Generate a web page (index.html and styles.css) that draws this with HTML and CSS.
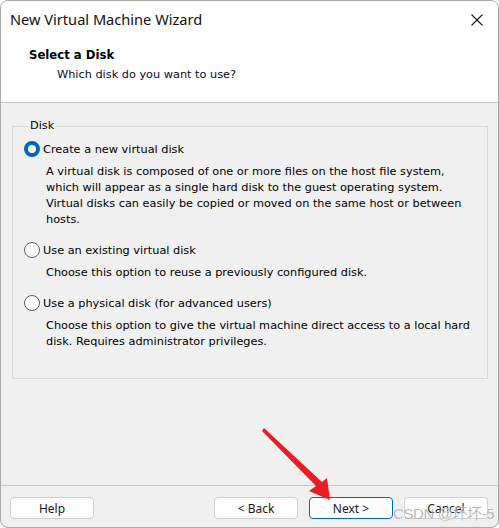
FILE: index.html
```html
<!DOCTYPE html>
<html>
<head>
<meta charset="utf-8">
<link rel="stylesheet" href="styles.css">
</head>
<body>
<div class="window">
  <div class="top">
    <div class="titlebar">
      <span class="title">New Virtual Machine Wizard</span>
      <svg class="close" width="12" height="12" viewBox="0 0 12 12"><path d="M0.5 0.5 L11.5 11.5 M11.5 0.5 L0.5 11.5" stroke="#1a1a1a" stroke-width="1.1" fill="none"/></svg>
    </div>
    <div class="header">
      <div class="h-title">Select a Disk</div>
      <div class="h-sub">Which disk do you want to use?</div>
    </div>
  </div>
  <div class="body">
    <fieldset class="group">
      <legend>Disk</legend>
      <div class="option">
        <div class="radio-row"><span class="radio checked"></span><span>Create a new virtual disk</span></div>
        <p class="desc">A virtual disk is composed of one or more files on the host file system, which will appear as a single hard disk to the guest operating system. Virtual disks can easily be copied or moved on the same host or between hosts.</p>
      </div>
      <div class="option">
        <div class="radio-row"><span class="radio"></span><span>Use an existing virtual disk</span></div>
        <p class="desc">Choose this option to reuse a previously configured disk.</p>
      </div>
      <div class="option">
        <div class="radio-row"><span class="radio"></span><span>Use a physical disk (for advanced users)</span></div>
        <p class="desc">Choose this option to give the virtual machine direct access to a local hard disk. Requires administrator privileges.</p>
      </div>
    </fieldset>
  </div>
  <div class="footer">
    <button class="btn">Help</button>
    <div class="right-btns">
      <button class="btn">&lt; Back</button>
      <button class="btn primary">Next &gt;</button>
      <button class="btn">Cancel</button>
    </div>
  </div>
  <svg class="arrow" width="499" height="528" viewBox="0 0 499 528">
    <polygon points="262,431 264,428 322,482 327,478 330,500 309,491 316,486" fill="#ec1c24"/>
  </svg>
  <div class="watermark">CSDN @坏坏-5</div>
</div>
</body>
</html>
```
FILE: styles.css
```css
html, body { margin: 0; padding: 0; background: #ffffff; }
.window {
  position: relative;
  width: 499px;
  height: 528px;
  box-sizing: border-box;
  border: 1px solid #a8a8a8;
  border-radius: 8px;
  overflow: hidden;
  background: #f0f0f0;
  display: flex;
  flex-direction: column;
  font-family: "DejaVu Sans", Verdana, sans-serif;
  font-size: 11.3px;
  color: #000;
}
.top {
  background: #ffffff;
  border-bottom: 1px solid #c5c5c5;
  height: 102px;
  box-sizing: border-box;
  flex: none;
}
.titlebar {
  height: 38px;
  display: flex;
  align-items: center;
  justify-content: space-between;
  padding: 0 15px 0 9px;
}
.title {
  font-family: "Noto Sans", "Open Sans", sans-serif;
  font-size: 14.6px;
  color: #111;
  margin-top: -2px;
}
.close { margin-top: -1px; }
.header { padding: 8px 0 0 28px; }
.h-title { font-weight: bold; font-size: 11.7px; line-height: 16px; }
.h-sub { padding-left: 28px; margin-top: 4px; line-height: 16px; color: #0a0a30; }
.body {
  flex: 1;
  padding: 16px 10px 0 11px;
}
.group {
  margin: 0;
  border: 1px solid #d8d8d8;
  padding: 7px 0 0 11px;
  height: 260px;
  box-sizing: border-box;
}
.group legend {
  padding: 0 2px;
  margin-left: 4px;
  line-height: 14px;
}
.option { margin-bottom: 13px; }
.radio-row {
  display: flex;
  align-items: center;
  gap: 3px;
  height: 18px;
}
.radio {
  width: 16px;
  height: 16px;
  box-sizing: border-box;
  border-radius: 50%;
  border: 1px solid #5c5c5c;
  background: #fff;
  flex: none;
}
.radio.checked {
  border: 4.5px solid #0067c0;
  background: #fff;
}
.desc {
  margin: 6px 8px 0 22px;
  line-height: 16px;
}
.footer {
  flex: none;
  height: 42px;
  border-top: 1px solid #c5c5c5;
  display: flex;
  align-items: flex-start;
  justify-content: space-between;
  padding: 11px 10px 0 9px;
  box-sizing: border-box;
}
.right-btns { display: flex; gap: 11px; }
.btn {
  width: 84px;
  height: 22px;
  box-sizing: border-box;
  border: 1px solid #d0d0d0;
  border-radius: 4px;
  background: #fdfdfd;
  font-family: "Noto Sans", "Open Sans", sans-serif;
  font-size: 12px;
  color: #1a1a1a;
  padding: 0;
}
.btn.primary { border: 1px solid #0067c0; }
.arrow { position: absolute; left: -1px; top: -1px; pointer-events: none; }
.watermark {
  position: absolute;
  left: 392px;
  top: 501px;
  white-space: nowrap;
  font-family: "Liberation Sans", "Noto Sans CJK SC", sans-serif;
  font-size: 15px;
  color: rgba(120,120,120,0.75);
  -webkit-text-stroke: 0.3px #fff;
  letter-spacing: -0.4px;
}
```
